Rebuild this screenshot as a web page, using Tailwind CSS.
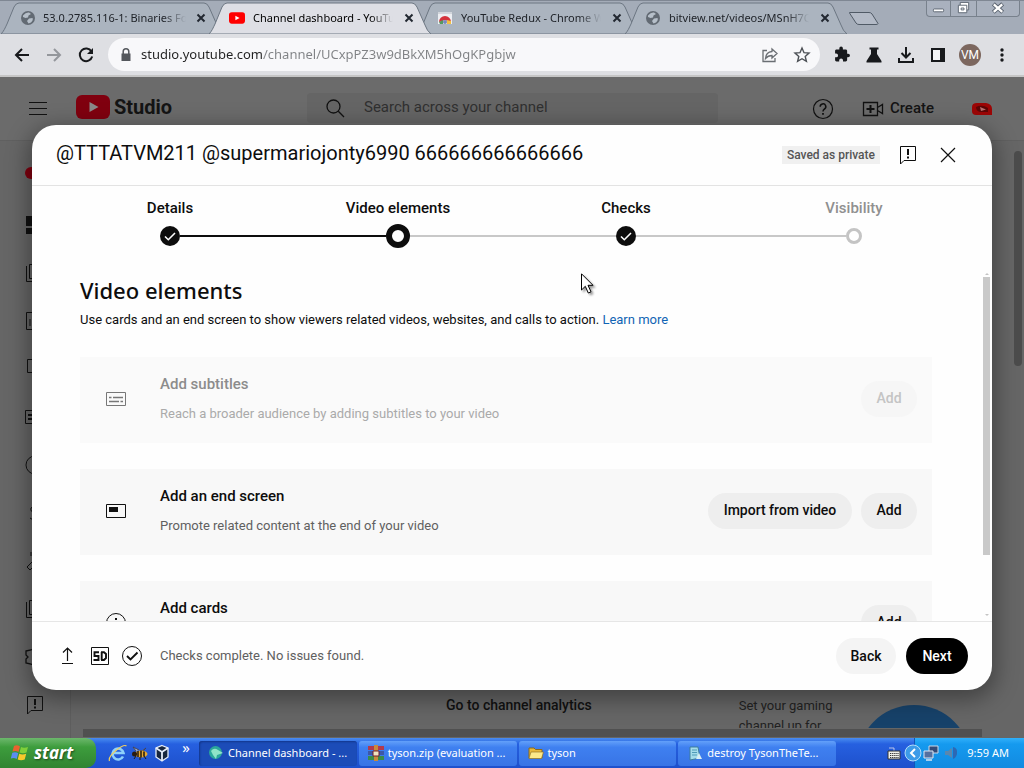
<!DOCTYPE html>
<html lang="en">
<head>
<meta charset="utf-8">
<title>Channel dashboard - YouTube Studio</title>
<script src="https://cdn.jsdelivr.net/npm/@tailwindcss/browser@4"></script>
</head>
<body class="h-screen overflow-hidden flex flex-col font-['Roboto',sans-serif] text-[#0d0d0d] bg-[#666]">

<svg class="hidden">
  <symbol id="tab" viewBox="0 0 222 32"><path d="M0 32C3 29 4 26 6 22L13 5Q15 1 18 1H203Q206 1 208 5L216 23Q218 29 222 32Z"/></symbol>
  <symbol id="globe" viewBox="0 0 16 16"><circle cx="8" cy="8" r="7" fill="#626a73"/><path d="M3 5.500Q6 2 9 2.500L11 4L8.500 5.500L8 7.500L5.500 8L3 7ZM9 8.500L12.500 8Q13.500 10 11 12.500L8.500 13.500L7 11Z" fill="#b6bfc9"/></symbol>
  <symbol id="yt" viewBox="0 0 34 24"><rect width="34" height="24" rx="6"/><path d="M13.500 7L22.500 12L13.500 17Z" fill="var(--play)"/></symbol>
  <symbol id="feedback" viewBox="0 0 24 24"><path d="M4.500 3.500H19.500V17.500H8L4.500 21Z" fill="none" stroke="currentColor"/><path d="M11 6h2v6h-2zM11 13.500h2v2h-2z" fill="currentColor"/></symbol>
  <symbol id="tick" viewBox="0 0 20 20"><circle cx="10" cy="10" r="10" fill="#0d0d0d"/><path d="M5 10.500L8.300 13.700L15 7" fill="none" stroke="#fff" stroke-width="1.600"/></symbol>
</svg>

<!-- Browser tabs -->
<header class="relative shrink-0 h-[34px] flex items-end bg-[#a4acb8] border-t border-[#7f8793] font-['Noto_Sans',sans-serif] text-[11px] text-[#20242a]">
  <div class="relative w-[222px] h-8 ml-px flex items-center pl-[19px] pr-[14px] gap-[7px]">
    <svg class="absolute inset-0 w-full h-full fill-[#abb4bf] stroke-[#6c7682]"><use href="#tab"/></svg>
    <svg class="relative w-4 h-4 shrink-0"><use href="#globe"/></svg>
    <a href="#" class="relative flex-1 min-w-0 whitespace-nowrap [mask-image:linear-gradient(90deg,#000_84%,transparent)]">53.0.2785.116-1: Binaries Fo</a>
    <button aria-label="Close tab" class="relative shrink-0"><svg class="w-4 h-4" viewBox="0 0 16 16"><path d="M4.500 4.500L11.500 11.500M11.500 4.500L4.500 11.500" stroke="#222831" stroke-width="2"/></svg></button>
  </div>
  <div class="relative z-10 w-[222px] h-8 -ml-[14px] flex items-center pl-5 pr-[14px] gap-2">
    <svg class="absolute inset-0 w-full h-full fill-[#dedfe5] stroke-[#6c7682]"><use href="#tab"/></svg>
    <svg class="relative w-4 h-3 shrink-0 fill-[#f00] [--play:#fff]"><use href="#yt"/></svg>
    <a href="#" class="relative flex-1 min-w-0 whitespace-nowrap text-black [mask-image:linear-gradient(90deg,#000_84%,transparent)]">Channel dashboard - YouTub</a>
    <button aria-label="Close tab" class="relative shrink-0"><svg class="w-4 h-4" viewBox="0 0 16 16"><path d="M4.500 4.500L11.500 11.500M11.500 4.500L4.500 11.500" stroke="#222831" stroke-width="2"/></svg></button>
  </div>
  <div class="relative z-[2] w-[222px] h-8 -ml-[14px] flex items-center pl-5 pr-[14px] gap-2">
    <svg class="absolute inset-0 w-full h-full fill-[#abb4bf] stroke-[#6c7682]"><use href="#tab"/></svg>
    <svg class="relative w-4 h-4 shrink-0" viewBox="0 0 16 16"><path d="M1 2H15V14H1Z" fill="#eceef2"/><path d="M1 2H15V4H1Z" fill="#d2d6dc"/><path d="M2 12A6 6 0 0 1 14 12L10 11A2.500 2.500 0 0 0 6 11Z" fill="#d4323c"/><path d="M2 12L6 10V14H3Z" fill="#559a5f"/><path d="M14 11L10 10V14H14Z" fill="#f2c043"/><circle cx="8" cy="12" r="2" fill="#7788bb"/></svg>
    <a href="#" class="relative flex-1 min-w-0 whitespace-nowrap [mask-image:linear-gradient(90deg,#000_84%,transparent)]">YouTube Redux - Chrome We</a>
    <button aria-label="Close tab" class="relative shrink-0"><svg class="w-4 h-4" viewBox="0 0 16 16"><path d="M4.500 4.500L11.500 11.500M11.500 4.500L4.500 11.500" stroke="#222831" stroke-width="2"/></svg></button>
  </div>
  <div class="relative z-[3] w-[222px] h-8 -ml-[14px] flex items-center pl-5 pr-[14px] gap-2">
    <svg class="absolute inset-0 w-full h-full fill-[#abb4bf] stroke-[#6c7682]"><use href="#tab"/></svg>
    <svg class="relative w-4 h-4 shrink-0"><use href="#globe"/></svg>
    <a href="#" class="relative flex-1 min-w-0 whitespace-nowrap [mask-image:linear-gradient(90deg,#000_84%,transparent)]">bitview.net/videos/MSnH7QA</a>
    <button aria-label="Close tab" class="relative shrink-0"><svg class="w-4 h-4" viewBox="0 0 16 16"><path d="M4.500 4.500L11.500 11.500M11.500 4.500L4.500 11.500" stroke="#222831" stroke-width="2"/></svg></button>
  </div>
  <button aria-label="New tab" class="self-center"><svg class="w-8 h-4" viewBox="0 0 32 16"><path d="M2.500 2.500H22Q24 2.500 25 4L31 13.500Q31 14.500 29 14.500H12Q10 14.500 9 13L2.500 3Z" fill="#b3bac6" stroke="#505a66"/></svg></button>
  <div class="ml-auto mr-1 self-start flex h-4 border border-t-0 border-[#78818c] rounded-b-[4px] bg-[#a9b1be] divide-x divide-[#78818c]">
    <button aria-label="Minimize" class="w-6"><svg class="w-full h-full" viewBox="0 0 24 16"><rect x="6.500" y="8.500" width="11" height="3" rx="1" fill="#fff" stroke="#5b6470"/></svg></button>
    <button aria-label="Restore" class="w-[26px]"><svg class="w-full h-full" viewBox="0 0 26 16"><path d="M9.500 1.500H18.500V9.500H16.500V12.500H7.500V4.500H9.500Z" fill="#fff" stroke="#5b6470"/><path d="M10.500 7.500H13.500V9.500H10.500ZM9.500 4.500H16.500V9.500" fill="none" stroke="#5b6470"/></svg></button>
    <button aria-label="Close window" class="w-[42px]"><svg class="w-full h-full" viewBox="0 0 42 16"><path d="M16 3L26 12M26 3L16 12" stroke="#5b6470" stroke-width="4.500"/><path d="M16.500 3.500L25.500 11.500M25.500 3.500L16.500 11.500" stroke="#fff" stroke-width="2.500"/></svg></button>
  </div>
</header>

<!-- Toolbar -->
<nav class="shrink-0 h-[43px] flex items-center pl-3 pr-[6px] bg-[#dedfe3] border-b-2 border-[#c6c6c6]">
  <button aria-label="Back" class="w-8"><svg class="w-5 h-5" viewBox="0 0 20 20" fill="none" stroke="#17191c" stroke-width="2"><path d="M17 10H4M10 4L4 10L10 16"/></svg></button>
  <button aria-label="Forward" class="w-8"><svg class="w-5 h-5" viewBox="0 0 20 20" fill="none" stroke="#94979c" stroke-width="2"><path d="M3 10H16M10 4L16 10L10 16"/></svg></button>
  <button aria-label="Reload" class="w-8"><svg class="w-5 h-5" viewBox="0 0 20 20"><path d="M15.500 6.500A6.300 6.300 0 1 0 16.200 11.500" fill="none" stroke="#17191c" stroke-width="2"/><path d="M17 3V9H11Z" fill="#17191c"/></svg></button>
  <div class="flex-1 h-[33px] rounded-full bg-[#f8f8fa] flex items-center pl-[10px] pr-2 gap-[7px]">
    <svg class="w-4 h-4 shrink-0" viewBox="0 0 16 16"><path d="M3.500 6.500H12.500V14H3.500Z" fill="#54575c"/><path d="M5.200 7V4.500a2.800 2.800 0 0 1 5.600 0V7" fill="none" stroke="#54575c" stroke-width="1.500"/></svg>
    <input aria-label="Address" value="studio.youtube.com/channel/UCxpPZ3w9dBkXM5hOgKPgbjw" class="flex-1 min-w-0 outline-none font-['Noto_Sans',sans-serif] text-[13px] text-transparent bg-clip-text bg-[linear-gradient(90deg,#222_122px,#808285_122px)]">
    <button aria-label="Share" class="w-8 -mr-[7px]"><svg class="w-5 h-5 mx-auto" viewBox="0 0 20 20" fill="none" stroke="#6a6e73" stroke-width="1.300"><path d="M7 5.500H3V16.500H15V13"/><path d="M12 4L17 8.500L12 13V10.500Q8 10.500 5.500 13.500Q6 7 12 6.500Z"/></svg></button>
    <button aria-label="Bookmark" class="w-8 -mr-[6px]"><svg class="w-5 h-5 mx-auto" viewBox="0 0 20 20"><path d="M10 3L12 7.700L17 8.100L13.200 11.400L14.400 16.300L10 13.700L5.600 16.300L6.800 11.400L3 8.100L8 7.700Z" fill="none" stroke="#4c5055" stroke-width="1.400"/></svg></button>
  </div>
  <div class="flex items-center pl-[6px] text-[#17191c]">
    <button aria-label="Extensions" class="w-8"><svg class="w-5 h-5 mx-auto" viewBox="0 0 24 24" fill="currentColor"><path d="M20.500 11H19V7c0-1.100-.9-2-2-2h-4V3.500a2.500 2.500 0 0 0-5 0V5H4c-1.100 0-2 .9-2 2v3.800h1.500a2.700 2.700 0 0 1 0 5.400H2V20c0 1.100.9 2 2 2h3.800v-1.500a2.700 2.700 0 0 1 5.400 0V22H17c1.100 0 2-.9 2-2v-4h1.500a2.500 2.500 0 0 0 0-5z" transform="translate(2 1) scale(.85)"/></svg></button>
    <button aria-label="Labs" class="w-8"><svg class="w-5 h-5 mx-auto" viewBox="0 0 20 20" fill="currentColor"><path d="M5.500 2.500H14.500V4.500H13V9L17.500 16V17.500H2.500V16L7 9V4.500H5.500Z"/></svg></button>
    <button aria-label="Downloads" class="w-8"><svg class="w-5 h-5 mx-auto" viewBox="0 0 20 20" fill="none" stroke="currentColor" stroke-width="2"><path d="M10 2V12M5.500 8L10 12.500L14.500 8M3 13V17H17V13"/></svg></button>
    <button aria-label="Side panel" class="w-8"><svg class="w-5 h-5 mx-auto" viewBox="0 0 20 20"><path d="M4 4H12V16H4Z" fill="#f4f4f6"/><path d="M4 4H16V16H4Z" fill="none" stroke="currentColor" stroke-width="2"/><path d="M12 4H16V16H12Z" fill="currentColor"/></svg></button>
    <button aria-label="Profile" class="w-[22px] h-[22px] mx-[5px] rounded-full bg-[#7c675f] text-white text-[12px]">VM</button>
    <button aria-label="Menu" class="w-8"><svg class="w-5 h-5 mx-auto" viewBox="0 0 20 20" fill="currentColor"><circle cx="10" cy="5" r="1.700"/><circle cx="10" cy="10" r="1.700"/><circle cx="10" cy="15" r="1.700"/></svg></button>
  </div>
</nav>

<!-- Page -->
<div class="relative flex-1 min-h-0 flex flex-col bg-[#666]">
  <div class="shrink-0 h-16 flex items-center pl-[26px] pr-8 border-b border-[#606060] bg-[#6b6b6b] text-[#141414]">
    <button aria-label="Menu"><svg class="w-6 h-6" viewBox="0 0 24 24" stroke="#111"><path d="M3 5.500H21M3 11.500H21M3 17.500H21"/></svg></button>
    <a href="#" aria-label="Studio" class="flex items-center gap-1 ml-[26px] w-[231px] -mt-1">
      <svg class="w-[34px] h-6 fill-[#80000f] [--play:#8a8a8a]"><use href="#yt"/></svg>
      <span class="font-bold text-[20px] leading-6">Studio</span>
    </a>
    <label class="w-[411px] h-[30px] -mt-[2px] flex items-center rounded bg-[#656565] pl-4 gap-[17px]">
      <svg class="w-6 h-6 shrink-0" viewBox="0 0 24 24" fill="none" stroke="#111" stroke-width="1.300"><circle cx="10.500" cy="10.500" r="6.500"/><path d="M15.300 15.300L21 21"/></svg>
      <input placeholder="Search across your channel" aria-label="Search across your channel" class="flex-1 outline-none text-[15px] placeholder:text-[#303030]">
    </label>
    <button aria-label="Help" class="ml-auto"><svg class="w-6 h-6" viewBox="0 0 24 24" fill="none" stroke="#111"><circle cx="12" cy="12" r="9.500" stroke-width="1.200"/><path d="M9.200 9.800A2.800 2.800 0 1 1 13.500 12Q12 13 12 14.500" stroke-width="1.500"/><path d="M12 16V17.700" stroke-width="1.800"/></svg></button>
    <button class="ml-[26px] flex items-center gap-[5px] text-[15px] font-medium"><svg class="w-6 h-6" viewBox="0 0 24 24" fill="none" stroke="#111"><path d="M2.500 5.500H16.500V18.500H2.500ZM16.500 10.500L21.500 7.500V16.500L16.500 13.500" stroke-width="1.300"/><path d="M9.500 8V16M5.500 12H13.500" stroke-width="2"/></svg>Create</button>
    <button aria-label="Account" class="ml-[38px]"><svg class="w-5 h-5" viewBox="0 0 20 20"><path d="M0 8Q0 4 5 4H14Q20 5 20 10V16H4Q0 16 0 12Z" fill="#9c0505"/><path d="M4 8Q10 5 16 9V13H8Q4 12 4 8Z" fill="#5c0606"/><path d="M8 8L14 10.500L9 12Z" fill="#b87070"/></svg></button>
  </div>
  <div class="flex-1 min-h-0 flex">
    <aside class="w-[71px] border-r border-[#5e5e5e] overflow-hidden flex flex-col items-center *:shrink-0 text-[#111]">
      <div class="h-[60px] pt-[26px]"><div class="w-5 h-3 rounded-md bg-[#80000f]"></div></div>
      <a href="#" aria-label="Dashboard" class="h-12 flex items-center"><svg class="w-6 h-6" viewBox="0 0 24 24" fill="currentColor"><path d="M3 3H11V13H3ZM3 15H11V21H3ZM13 3H21V9H13ZM13 11H21V21H13Z"/></svg></a>
      <a href="#" aria-label="Content" class="h-12 flex items-center"><svg class="w-6 h-6" viewBox="0 0 24 24" fill="none" stroke="currentColor"><path d="M3.500 5V20.500H19M6.500 3.500H20.500V17.500H6.500Z"/></svg></a>
      <a href="#" aria-label="Analytics" class="h-12 flex items-center"><svg class="w-6 h-6" viewBox="0 0 24 24" fill="none" stroke="currentColor"><path d="M3.500 3.500H20.500V20.500H3.500ZM7 17V10M12 17V7M16 17V13"/></svg></a>
      <a href="#" aria-label="Comments" class="h-12 flex items-center"><svg class="w-6 h-6" viewBox="0 0 24 24" fill="none" stroke="currentColor"><path d="M4.500 2.500H20.500V15.500H4.500Z"/></svg></a>
      <a href="#" aria-label="Subtitles" class="h-12 flex items-center"><svg class="w-6 h-6" viewBox="0 0 24 24" fill="none" stroke="currentColor"><path d="M2.500 5.500H21.500V18.500H2.500Z"/><path d="M5 10H9M5 14H16" stroke-width="2"/></svg></a>
      <a href="#" aria-label="Copyright" class="h-12 flex items-center"><svg class="w-6 h-6" viewBox="0 0 24 24" fill="none" stroke="currentColor"><circle cx="12" cy="12" r="9"/></svg></a>
      <a href="#" aria-label="Earn" class="h-12 flex items-center"><svg class="w-6 h-6" viewBox="0 0 24 24" fill="none" stroke="currentColor"><path d="M17 7Q12 3 8 7Q7 11 12 12T17 17Q12 21 7 17"/></svg></a>
      <a href="#" aria-label="Customization" class="h-12 flex items-center"><svg class="w-6 h-6" viewBox="0 0 24 24" fill="none" stroke="currentColor"><path d="M4 18L14 8L17 11L7 21ZM8 3V7"/></svg></a>
      <a href="#" aria-label="Audio library" class="h-12 flex items-center"><svg class="w-6 h-6" viewBox="0 0 24 24" fill="none" stroke="currentColor"><path d="M3.500 5V20.500H19M6.500 3.500H20.500V17.500H6.500Z"/></svg></a>
      <a href="#" aria-label="Settings" class="h-12 flex items-center"><svg class="w-6 h-6" viewBox="0 0 24 24" fill="none" stroke="currentColor" stroke-width="1.300"><path d="M3 6L8 5L12 3L16 5L21 6V10L19 12L21 14V18L16 19L12 21L8 19L3 18V14L5 12L3 10Z"/></svg></a>
      <a href="#" aria-label="Send feedback" class="h-12 flex items-center"><svg class="w-6 h-6"><use href="#feedback"/></svg></a>
    </aside>
    <main class="flex-1 min-w-0 flex flex-col">
      <div class="flex-1 min-h-0 overflow-hidden flex items-end pl-[341px]">
        <a href="#" class="h-9 px-[34px] text-[14px] leading-[27px] font-medium text-[#111] whitespace-nowrap">Go to channel analytics</a>
        <div class="ml-[113px] h-8 w-[118px] text-[13px] leading-5 text-[#222]">Set your gaming channel up for</div>
        <div class="h-[23px] w-[114px] overflow-hidden"><div class="w-[114px] h-[114px] rounded-full bg-[#17426a]"></div></div>
      </div>
      <div class="h-[10px] pl-3 pr-8 py-px"><div class="h-full bg-[#505050]"></div></div>
    </main>
    <div class="w-[10px] pt-[10px]"><div class="h-[215px] w-2 rounded-sm bg-[#4c4c4c]"></div></div>
  </div>

  <!-- Upload dialog -->
  <div class="absolute inset-0 px-8 py-12 flex">
    <section role="dialog" aria-labelledby="dlg" class="flex-1 min-w-0 flex flex-col bg-[#fefefe] rounded-[24px] overflow-hidden shadow-[0_6px_22px_4px_rgba(0,0,0,0.35)]">
      <div class="shrink-0 h-[61px] border-b border-[#e3e3e3] flex items-center px-6">
        <h1 id="dlg" class="text-[20px] leading-7 -mt-1">@TTTATVM211 @supermariojonty6990 666666666666666</h1>
        <span class="ml-auto mr-4 bg-[#f0f0f0] text-[#555] text-[12px] font-medium leading-[18px] px-[5px]">Saved as private</span>
        <button aria-label="Send feedback"><svg class="w-6 h-6"><use href="#feedback"/></svg></button>
        <button aria-label="Close" class="ml-4 mr-2"><svg class="w-6 h-6" viewBox="0 0 24 24"><path d="M5 5L19 19M19 5L5 19" stroke="#111" stroke-width="1.200"/></svg></button>
      </div>
      <ol class="shrink-0 h-[84px] grid grid-cols-4 px-6 pt-3 text-[15px] leading-5 font-medium text-center">
        <li><button class="w-full">Details<span class="mt-[6px] h-6 flex items-center"><span class="flex-1"></span><svg class="w-5 h-5"><use href="#tick"/></svg><span class="flex-1 h-[2px] bg-[#0d0d0d]"></span></span></button></li>
        <li><button class="w-full">Video elements<span class="mt-[6px] h-6 flex items-center"><span class="flex-1 h-[2px] bg-[#0d0d0d]"></span><span class="w-6 h-6 rounded-full border-[6px] border-[#0d0d0d]"></span><span class="flex-1 h-[2px] bg-[#c8c8c8]"></span></span></button></li>
        <li><button class="w-full">Checks<span class="mt-[6px] h-6 flex items-center"><span class="flex-1 h-[2px] bg-[#c8c8c8]"></span><svg class="w-5 h-5"><use href="#tick"/></svg><span class="flex-1 h-[2px] bg-[#c8c8c8]"></span></span></button></li>
        <li><button class="w-full text-[#909090]">Visibility<span class="mt-[6px] h-6 flex items-center"><span class="flex-1 h-[2px] bg-[#c8c8c8]"></span><span class="w-4 h-4 rounded-full border-[3px] border-[#c4c4c4]"></span><span class="flex-1"></span></span></button></li>
      </ol>
      <div class="flex-1 min-h-0 flex overflow-hidden pl-12">
        <div class="flex-1 min-w-0 mr-[51px] pt-1">
          <h2 class="font-['Noto_Sans',sans-serif] font-medium text-[22px] leading-8">Video elements</h2>
          <p class="mt-1 text-[13px] leading-5">Use cards and an end screen to show viewers related videos, websites, and calls to action. <a href="#" class="text-[#1064b4]">Learn more</a></p>
          <div class="mt-[27px] flex flex-col gap-[26px]">
            <article class="h-[86px] bg-[#fafafa] flex items-center pl-6 pr-[15px] pb-[3px]">
              <svg class="w-6 h-6 shrink-0" viewBox="0 0 24 24" fill="none" stroke="#777"><path d="M2.500 5.500H21.500V18.500H2.500Z"/><path d="M5 10.500H7.500M9 10.500H19M5 14.500H15M16.500 14.500H19" stroke-width="1.500"/></svg>
              <div class="flex-1 ml-8"><h3 class="text-[15px] leading-5 font-medium text-[#8c8c8c]">Add subtitles</h3><p class="mt-[10px] text-[13px] leading-5 text-[#aaa]">Reach a broader audience by adding subtitles to your video</p></div>
              <button disabled class="h-9 w-14 rounded-full bg-[#f6f6f6] text-[14px] font-medium text-[#c4c4c4]">Add</button>
            </article>
            <article class="h-[86px] bg-[#f8f8f8] flex items-center pl-6 pr-[15px] pb-[3px]">
              <svg class="w-6 h-6 shrink-0" viewBox="0 0 24 24"><path d="M2.500 5.500H21.500V18.500H2.500Z" fill="none" stroke="#111"/><path d="M5 8H14V13H5Z" fill="#111"/></svg>
              <div class="flex-1 ml-8"><h3 class="text-[15px] leading-5 font-medium">Add an end screen</h3><p class="mt-[10px] text-[13px] leading-5 text-[#606060]">Promote related content at the end of your video</p></div>
              <button class="h-9 w-36 mr-[9px] rounded-full bg-[#eee] text-[14px] font-medium">Import from video</button>
              <button class="h-9 w-14 rounded-full bg-[#eee] text-[14px] font-medium">Add</button>
            </article>
            <article class="h-[86px] bg-[#f8f8f8] flex items-center pl-6 pr-[15px] pb-[3px]">
              <svg class="w-6 h-6 shrink-0" viewBox="0 0 24 24"><circle cx="12" cy="12" r="9.500" fill="none" stroke="#111"/><path d="M11 7H13V9H11ZM11 11H13V17H11Z" fill="#111"/></svg>
              <div class="flex-1 ml-8"><h3 class="text-[15px] leading-5 font-medium">Add cards</h3><p class="mt-[10px] text-[13px] leading-5 text-[#606060]">Promote related content during your video</p></div>
              <button class="h-9 w-14 rounded-full bg-[#eee] text-[14px] font-medium">Add</button>
            </article>
          </div>
        </div>
        <div class="w-[9px] flex flex-col justify-between pt-[2px] pb-1">
          <svg class="w-2 h-1" viewBox="0 0 8 4"><path d="M2 3L4 1L6 3Z" fill="#c4c4c4"/></svg>
          <div class="w-[7px] h-[278px] mb-auto mt-px bg-[#c9c9c9]"></div>
          <svg class="w-2 h-1" viewBox="0 0 8 4"><path d="M2 1L4 3L6 1Z" fill="#c4c4c4"/></svg>
        </div>
      </div>
      <div class="shrink-0 h-[69px] border-t border-[#e6e6e6] flex items-center px-6">
        <svg class="w-6 h-6 mr-2" viewBox="0 0 24 24" fill="none" stroke="#111"><path d="M11.500 17V4M7 8.500L11.500 4L16 8.500M6 19.500H17" stroke-width="1.200"/></svg>
        <svg class="w-6 h-6 mr-2" viewBox="0 0 24 24"><path d="M3.500 3.500H20.500V20.500H3.500Z" fill="none" stroke="#111"/><path d="M11 8.200H6.500V12H10.500V16H5.500M13.700 8V16M13 8.200H16L18 10V14L16 16H13" fill="none" stroke="#111" stroke-width="1.900"/></svg>
        <svg class="w-6 h-6 mr-4" viewBox="0 0 24 24" fill="none" stroke="#111"><circle cx="12" cy="12" r="9.500"/><path d="M7 12L10.500 15.500L17.500 8.500" stroke-width="1.900"/></svg>
        <span class="text-[13px] text-[#606060]">Checks complete. No issues found.</span>
        <button class="ml-auto h-9 w-[60px] rounded-full bg-[#f4f4f4] text-[14px] font-medium">Back</button>
        <button class="ml-[10px] h-9 w-[62px] rounded-full bg-black text-white text-[14px] font-medium">Next</button>
      </div>
    </section>
  </div>
  <!-- Mouse pointer -->
  <svg class="absolute left-[581px] top-[196px] w-4 h-6 drop-shadow-[2px_2px_1px_rgba(0,0,0,0.4)]" viewBox="0 0 16 24"><path d="M.5 .8V17L4.300 13.300L7.300 20L10 18.800L7 12.300H12Z" fill="#fff" stroke="#000"/></svg>
</div>

<!-- Taskbar -->
<footer class="shrink-0 h-[30px] flex items-center bg-linear-to-b from-[#4a8cf0] via-[#2660e0] via-20% to-[#1e50cc] font-['Noto_Sans',sans-serif] text-[11px] text-white">
  <button class="h-full w-24 rounded-r-[10px] bg-linear-to-b from-[#6cb86c] via-[#3d9d3d] via-30% to-[#318431] flex items-center pl-[10px] gap-1 font-['Open_Sans',sans-serif] font-bold italic text-[17px] [text-shadow:1px_1px_2px_rgba(0,0,0,0.5)]">
    <svg class="w-5 h-5" viewBox="0 0 20 20"><path d="M4 3Q7 1.500 10 3.500L8.500 9Q6 7.500 2.500 8.500Z" fill="#e8622f"/><path d="M11 4Q14 5.500 18 4L16.500 9.500Q13 11 9.500 9.500Z" fill="#7fcf3a"/><path d="M2.300 9.800Q5.500 8.500 8.200 10.300L6.700 16Q4 14.500 .8 15.500Z" fill="#5a8df0"/><path d="M9.200 10.800Q12.500 12.300 16.200 10.800L14.700 16.500Q11 18 7.700 16.500Z" fill="#f8c92c"/></svg>start</button>
  <div class="flex items-center gap-[2px] ml-3">
    <button aria-label="Internet Explorer"><svg class="w-5 h-5" viewBox="0 0 20 20"><path d="M15 13.500A5.500 5.500 0 1 1 15.500 10H6" fill="none" stroke="#8ed0fb" stroke-width="2.600"/><path d="M1.500 18Q0 14 8 7.500T18.500 3" fill="none" stroke="#f0d060" stroke-width="1.200"/></svg></button>
    <button aria-label="Bee"><svg class="w-5 h-5" viewBox="0 0 20 20"><path d="M6 8L3 4L9 7M12 8L16 5L13 8" fill="#b8c4d8" stroke="#445"/><ellipse cx="11" cy="11" rx="6.500" ry="3.500" fill="#e6a832"/><path d="M8 8V14M11 7.500V14.500M14 8.500V13.500" stroke="#221a10" stroke-width="1.500"/><circle cx="4.500" cy="11" r="2.500" fill="#2a1c10"/><path d="M6 13L4 16M10 14L10 17M14 13L16 16" stroke="#221a10"/></svg></button>
    <button aria-label="VirtualBox"><svg class="w-5 h-5" viewBox="0 0 20 20"><path d="M10 2.500L16 5V14L10 18L4 14V5Z" fill="#16263e" stroke="#e6eefa" stroke-width="1.300"/><path d="M4 5L10 9L16 5M10 9V18" fill="none" stroke="#e6eefa" stroke-width="1.800"/></svg></button>
  </div>
  <button class="ml-[5px] w-[18px] h-full pb-3 text-[15px] leading-[18px]" aria-label="More">»</button>
  <div class="flex-1 min-w-0 ml-1 flex gap-[2px] h-[25px] mr-[50px] *:flex-1 *:min-w-0 *:flex *:items-center *:gap-1 *:rounded-[3px] *:pl-[9px] *:text-left">
    <button class="bg-[#1c4cb8] shadow-[inset_1px_1px_2px_#12368c]"><svg class="w-4 h-4 shrink-0" viewBox="0 0 16 16"><circle cx="7.500" cy="7.500" r="6.500" fill="#2ba79b"/><path d="M3 6Q6 2 10 5L15 8L9 10L8 14L5 10Z" fill="#8fe4c8"/></svg><span>Channel dashboard - ...</span></button>
    <button class="bg-linear-to-b from-[#63a0fa] via-[#3f80f0] via-25% to-[#3874e6]"><svg class="w-4 h-4 shrink-0" viewBox="0 0 16 16"><path d="M0 1H16V5H0Z" fill="#b23a4c"/><path d="M0 6H16V10H0Z" fill="#3c58a8"/><path d="M0 11H16V15H0Z" fill="#3a8c4a"/><path d="M6 0H10V16H6Z" fill="#c88a3c"/><path d="M5 6H11V11H5Z" fill="#f0e4c0" stroke="#70202c"/></svg><span>tyson.zip (evaluation ...</span></button>
    <button class="bg-linear-to-b from-[#63a0fa] via-[#3f80f0] via-25% to-[#3874e6]"><svg class="w-4 h-4 shrink-0" viewBox="0 0 16 16"><path d="M1 3H6L7.500 4.500H14V13H1Z" fill="#e8b93c" stroke="#8a6a1c"/><path d="M3 7H15.500L13.500 13.500H1Z" fill="#fde98a" stroke="#8a6a1c" stroke-width=".6"/></svg><span>tyson</span></button>
    <button class="bg-linear-to-b from-[#63a0fa] via-[#3f80f0] via-25% to-[#3874e6]"><svg class="w-4 h-4 shrink-0" viewBox="0 0 16 16"><path d="M3 2H11L13 13L3 15Z" fill="#a5dcea" stroke="#3f7f9c"/><path d="M5 5H10M5 7.500H10M5 10H10" stroke="#4f9bb8"/><path d="M12 8L15 14H9Z" fill="#d8eef4"/></svg><span>destroy TysonTheTe...</span></button>
  </div>
  <svg class="w-4 h-4 shrink-0" viewBox="0 0 16 16"><path d="M8 6V3H3" fill="none" stroke="#dde" stroke-width=".8"/><path d="M2 6H14V14H2Z" fill="#f0f0ea" stroke="#333"/><path d="M4 8.500H13M4 10.500H13M4 12.500H13" stroke="#333" stroke-dasharray="1.300 .8"/></svg>
  <div class="relative h-full ml-3 w-[110px] shrink-0 border-l border-[#1254b8] bg-linear-to-b from-[#2fb0fa] via-[#159aef] via-20% to-[#128ae0] flex items-center pl-2 pr-[15px]">
    <button aria-label="Show hidden icons" class="absolute -left-[11px]"><svg class="w-[18px] h-[18px]" viewBox="0 0 18 18"><circle cx="9" cy="9" r="8" fill="#3d9be8" stroke="#b4dcf8"/><path d="M11 5L7 9L11 13" fill="none" stroke="#fff" stroke-width="2"/></svg></button>
    <svg class="w-4 h-4 shrink-0" viewBox="0 0 16 16"><path d="M6 1H15V8H6Z" fill="#324a78" stroke="#cdd8e8"/><path d="M1 6H10V13H1Z" fill="#5470a0" stroke="#dde6f2"/><path d="M3 15H9" stroke="#dde6f2" stroke-width="1.500"/></svg>
    <svg class="w-4 h-4 ml-1 shrink-0" viewBox="0 0 16 16"><path d="M2 6H5L9 3V13L5 10H2Z" fill="#5a87ae"/><path d="M10 2Q15 3 14 9Q13 13 10 14Z" fill="#2c68b4"/></svg>
    <span class="ml-auto whitespace-nowrap">9:59 AM</span>
  </div>
</footer>
</body>
</html>
